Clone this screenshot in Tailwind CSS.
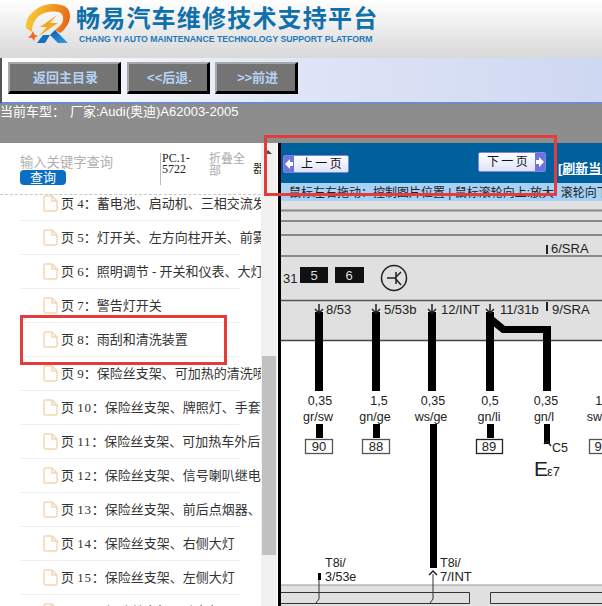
<!DOCTYPE html>
<html lang="zh">
<head>
<meta charset="UTF-8" />
<title>畅易汽车维修技术支持平台</title>
<script src="https://cdn.jsdelivr.net/npm/@tailwindcss/browser@4"></script>
</head>
<body class="relative w-[602px] h-[606px] overflow-hidden bg-white font-['Liberation_Sans','Noto_Sans_CJK_SC',sans-serif]">

  <!-- logo header -->
  <header class="h-[58px] flex bg-gradient-to-b from-white to-[#d9d9d9]">
    <svg class="ml-[25px] mt-[3px] w-[47px] h-[43px] shrink-0" viewBox="0 0 47 43">
      <defs>
        <linearGradient id="ring" x1="0" y1="0.3" x2="1" y2="0.5">
          <stop offset="0" stop-color="#f9cf3a" />
          <stop offset="0.55" stop-color="#f29a22" />
          <stop offset="1" stop-color="#e9661b" />
        </linearGradient>
        <linearGradient id="leg" x1="0" y1="0" x2="1" y2="1">
          <stop offset="0" stop-color="#0b5aa8" />
          <stop offset="1" stop-color="#36a2e6" />
        </linearGradient>
      </defs>
      <path d="M1 25C1 16 4 12 8 9C14 3 21 1 28 1C36 1 42 3 44 8C46 13 45 19 41 24C39 27 37 29 35 30L30 27C34 24 38 21 38 16C38 11 36 9 32 9C26 8 21 9 17 11C11 14 7 20 7 29Z" fill="url(#ring)" />
      <path d="M32 12L15 24L22 24L14 33L33 20L25 20Z" fill="#f5a623" />
      <path d="M12 40L18 32H25L20 40Z" fill="#1670c0" />
      <path d="M30 27L43 40H33L25 32Z" fill="url(#leg)" />
      <path d="M8 28L9.500 31.500L13 33L10 34.500L9 38L7 35L3 34.500L6 32Z" fill="#ee6a25" />
    </svg>
    <div class="ml-[4px] pt-[1px]">
      <div class="text-[24px] leading-[32px] font-bold tracking-[1.200px] text-[#1070ab] whitespace-nowrap font-['Noto_Sans_CJK_SC',sans-serif]">畅易汽车维修技术支持平台</div>
      <div class="ml-[3px] mt-[1px] text-[8.700px] leading-[10px] font-bold text-[#1f78b8] whitespace-nowrap">CHANG YI AUTO MAINTENANCE TECHNOLOGY SUPPORT PLATFORM</div>
    </div>
  </header>

  <!-- toolbar -->
  <nav class="h-[46px] flex items-start gap-[5px] pl-[6px] pt-[4px] border-l-2 border-l-[#555] border-b-[2px] border-b-[#6f8bd0] bg-gradient-to-r from-white via-[#dfe5f6] to-[#cfd8f2]">
    <button class="w-[113px] h-[32px] mr-[1px] pl-[3px] bg-[#747474] border-2 border-t-[#a8a8a8] border-l-[#a8a8a8] border-r-[3px] border-b-[3px] border-r-black border-b-black text-[13px] font-bold text-[#b4d2f3]">返回主目录</button>
    <button class="w-[83px] h-[32px] pl-[3px] bg-[#747474] border-2 border-t-[#a8a8a8] border-l-[#a8a8a8] border-r-[3px] border-b-[3px] border-r-black border-b-black text-[13px] font-bold text-[#b4d2f3]">&lt;&lt;后退.</button>
    <button class="w-[83px] h-[32px] pl-[3px] bg-[#747474] border-2 border-t-[#a8a8a8] border-l-[#a8a8a8] border-r-[3px] border-b-[3px] border-r-black border-b-black text-[13px] font-bold text-[#b4d2f3]">&gt;&gt;前进</button>
  </nav>

  <!-- car model bar -->
  <div class="h-[39px] bg-[#8d8d8d] text-[13px] leading-[15px] text-white whitespace-nowrap"><span class="inline-block w-[70px]">当前车型：</span>厂家:Audi(奥迪)A62003-2005</div>

  <main class="flex h-[463px]">
    <!-- left tree -->
    <aside class="w-[261px] shrink-0 overflow-hidden flex flex-col">
      <div class="h-[52px] shrink-0 flex border-b border-dashed border-b-[#c8c8c8]">
        <div class="w-[160px] pl-[20px] pt-[12px] shrink-0">
          <div class="text-[13.300px] leading-[15px] text-[#b0b0b0] whitespace-nowrap">输入关键字查询</div>
          <div class="mt-[0px] w-[46px] h-[15px] rounded-[4px] bg-[#0a6fc4] text-white text-[13px] leading-[15px] text-center">查询</div>
        </div>
        <div class="w-[49px] shrink-0 mt-[10px] h-[32px] border-l border-l-[#bbb] pl-[1px] text-[12px] leading-[11px] font-['Liberation_Serif',serif] text-[#222]">PC.1-<br />5722</div>
        <div class="w-[44px] shrink-0 mt-[10px] text-[12px] leading-[12px] text-[#aaa]">折叠全<br />部</div>
        <div class="w-[8px] shrink-0 overflow-hidden mt-[20px] text-[12px] leading-[12px] text-[#222]">器</div>
      </div>
      <ul class="-mt-[8px] text-[13px] leading-[34px] text-[#333] font-['Liberation_Serif','Noto_Sans_CJK_SC',serif]">
        <li class="h-[34px] ml-[20px] w-[220px] flex items-center border-b border-b-[#eeeeee] whitespace-nowrap">
          <svg class="ml-[23px] mr-[3px] w-[15px] h-[17px] shrink-0" viewBox="0 0 15 17" fill="none" stroke="#f5d6b0" stroke-width="1.5"><path d="M1 2.500Q1 1 2.500 1H9L14 6V14.500Q14 16 12.500 16H2.500Q1 16 1 14.500ZM9 1V6H14" /></svg>
          <span>页 4：蓄电池、启动机、三相交流发电机</span>
        </li>
        <li class="h-[34px] ml-[20px] w-[220px] flex items-center border-b border-b-[#eeeeee] whitespace-nowrap">
          <svg class="ml-[23px] mr-[3px] w-[15px] h-[17px] shrink-0" viewBox="0 0 15 17" fill="none" stroke="#f5d6b0" stroke-width="1.5"><path d="M1 2.500Q1 1 2.500 1H9L14 6V14.500Q14 16 12.500 16H2.500Q1 16 1 14.500ZM9 1V6H14" /></svg>
          <span>页 5：灯开关、左方向柱开关、前雾灯</span>
        </li>
        <li class="h-[34px] ml-[20px] w-[220px] flex items-center border-b border-b-[#eeeeee] whitespace-nowrap">
          <svg class="ml-[23px] mr-[3px] w-[15px] h-[17px] shrink-0" viewBox="0 0 15 17" fill="none" stroke="#f5d6b0" stroke-width="1.5"><path d="M1 2.500Q1 1 2.500 1H9L14 6V14.500Q14 16 12.500 16H2.500Q1 16 1 14.500ZM9 1V6H14" /></svg>
          <span>页 6：照明调节 - 开关和仪表、大灯</span>
        </li>
        <li class="h-[34px] ml-[20px] w-[220px] flex items-center border-b border-b-[#eeeeee] whitespace-nowrap">
          <svg class="ml-[23px] mr-[3px] w-[15px] h-[17px] shrink-0" viewBox="0 0 15 17" fill="none" stroke="#f5d6b0" stroke-width="1.5"><path d="M1 2.500Q1 1 2.500 1H9L14 6V14.500Q14 16 12.500 16H2.500Q1 16 1 14.500ZM9 1V6H14" /></svg>
          <span>页 7：警告灯开关</span>
        </li>
        <li class="h-[34px] ml-[20px] w-[220px] flex items-center border-b border-b-[#eeeeee] whitespace-nowrap">
          <svg class="ml-[23px] mr-[3px] w-[15px] h-[17px] shrink-0" viewBox="0 0 15 17" fill="none" stroke="#f5d6b0" stroke-width="1.5"><path d="M1 2.500Q1 1 2.500 1H9L14 6V14.500Q14 16 12.500 16H2.500Q1 16 1 14.500ZM9 1V6H14" /></svg>
          <span>页 8：雨刮和清洗装置</span>
        </li>
        <li class="h-[34px] ml-[20px] w-[220px] flex items-center border-b border-b-[#eeeeee] whitespace-nowrap">
          <svg class="ml-[23px] mr-[3px] w-[15px] h-[17px] shrink-0" viewBox="0 0 15 17" fill="none" stroke="#f5d6b0" stroke-width="1.5"><path d="M1 2.500Q1 1 2.500 1H9L14 6V14.500Q14 16 12.500 16H2.500Q1 16 1 14.500ZM9 1V6H14" /></svg>
          <span>页 9：保险丝支架、可加热的清洗喷嘴</span>
        </li>
        <li class="h-[34px] ml-[20px] w-[220px] flex items-center border-b border-b-[#eeeeee] whitespace-nowrap">
          <svg class="ml-[23px] mr-[3px] w-[15px] h-[17px] shrink-0" viewBox="0 0 15 17" fill="none" stroke="#f5d6b0" stroke-width="1.5"><path d="M1 2.500Q1 1 2.500 1H9L14 6V14.500Q14 16 12.500 16H2.500Q1 16 1 14.500ZM9 1V6H14" /></svg>
          <span>页 <span class="tracking-[0.750px]">10</span>：保险丝支架、牌照灯、手套箱灯</span>
        </li>
        <li class="h-[34px] ml-[20px] w-[220px] flex items-center border-b border-b-[#eeeeee] whitespace-nowrap">
          <svg class="ml-[23px] mr-[3px] w-[15px] h-[17px] shrink-0" viewBox="0 0 15 17" fill="none" stroke="#f5d6b0" stroke-width="1.5"><path d="M1 2.500Q1 1 2.500 1H9L14 6V14.500Q14 16 12.500 16H2.500Q1 16 1 14.500ZM9 1V6H14" /></svg>
          <span>页 <span class="tracking-[0.750px]">11</span>：保险丝支架、可加热车外后视镜</span>
        </li>
        <li class="h-[34px] ml-[20px] w-[220px] flex items-center border-b border-b-[#eeeeee] whitespace-nowrap">
          <svg class="ml-[23px] mr-[3px] w-[15px] h-[17px] shrink-0" viewBox="0 0 15 17" fill="none" stroke="#f5d6b0" stroke-width="1.5"><path d="M1 2.500Q1 1 2.500 1H9L14 6V14.500Q14 16 12.500 16H2.500Q1 16 1 14.500ZM9 1V6H14" /></svg>
          <span>页 <span class="tracking-[0.750px]">12</span>：保险丝支架、信号喇叭继电器</span>
        </li>
        <li class="h-[34px] ml-[20px] w-[220px] flex items-center border-b border-b-[#eeeeee] whitespace-nowrap">
          <svg class="ml-[23px] mr-[3px] w-[15px] h-[17px] shrink-0" viewBox="0 0 15 17" fill="none" stroke="#f5d6b0" stroke-width="1.5"><path d="M1 2.500Q1 1 2.500 1H9L14 6V14.500Q14 16 12.500 16H2.500Q1 16 1 14.500ZM9 1V6H14" /></svg>
          <span>页 <span class="tracking-[0.750px]">13</span>：保险丝支架、前后点烟器、</span>
        </li>
        <li class="h-[34px] ml-[20px] w-[220px] flex items-center border-b border-b-[#eeeeee] whitespace-nowrap">
          <svg class="ml-[23px] mr-[3px] w-[15px] h-[17px] shrink-0" viewBox="0 0 15 17" fill="none" stroke="#f5d6b0" stroke-width="1.5"><path d="M1 2.500Q1 1 2.500 1H9L14 6V14.500Q14 16 12.500 16H2.500Q1 16 1 14.500ZM9 1V6H14" /></svg>
          <span>页 <span class="tracking-[0.750px]">14</span>：保险丝支架、右侧大灯</span>
        </li>
        <li class="h-[34px] ml-[20px] w-[220px] flex items-center border-b border-b-[#eeeeee] whitespace-nowrap">
          <svg class="ml-[23px] mr-[3px] w-[15px] h-[17px] shrink-0" viewBox="0 0 15 17" fill="none" stroke="#f5d6b0" stroke-width="1.5"><path d="M1 2.500Q1 1 2.500 1H9L14 6V14.500Q14 16 12.500 16H2.500Q1 16 1 14.500ZM9 1V6H14" /></svg>
          <span>页 <span class="tracking-[0.750px]">15</span>：保险丝支架、左侧大灯</span>
        </li>
        <li class="h-[34px] ml-[20px] w-[220px] flex items-center border-b border-b-[#eeeeee] whitespace-nowrap">
          <svg class="ml-[23px] mr-[3px] w-[15px] h-[17px] shrink-0" viewBox="0 0 15 17" fill="none" stroke="#f5d6b0" stroke-width="1.5"><path d="M1 2.500Q1 1 2.500 1H9L14 6V14.500Q14 16 12.500 16H2.500Q1 16 1 14.500ZM9 1V6H14" /></svg>
          <span>页 <span class="tracking-[0.750px]">16</span>：保险丝支架、驻车灯</span>
        </li>
      </ul>
    </aside>

    <!-- scrollbar -->
    <div class="w-[16px] shrink-0 bg-[#f1f1f1] relative">
      <div class="ml-[3px] mt-[7px] w-0 h-0 border-x-[4px] border-x-transparent border-b-[4px] border-b-[#505050]"></div>
      <div class="absolute left-[1px] top-[213px] w-[14px] h-[199px] bg-[#c1c1c1]"></div>
    </div>

    <!-- diagram viewer -->
    <section class="flex-1 min-w-0 border-l-[3px] border-l-black overflow-hidden ml-[1px]">
      <div class="h-[40px] relative bg-[#00609b] overflow-hidden">
        <button class="absolute left-[2px] top-[12px] w-[66px] h-[18px] flex items-center rounded-[2px] border border-[#7c86e0] bg-gradient-to-b from-white to-[#dfe3fb] text-[12px] leading-[16px] text-[#111]">
          <svg class="w-[10px] h-[16px] shrink-0 bg-[#6d74dd]" viewBox="0 0 10 16"><path d="M1 8L6 3V6H9V10H6V13Z" fill="#fff" /></svg>
          <span class="ml-[7px] whitespace-pre [word-spacing:-1px]">上 一 页</span>
        </button>
        <button class="absolute left-[197px] top-[9px] w-[68px] h-[20px] flex items-center rounded-[2px] border border-[#7c86e0] bg-gradient-to-b from-white to-[#dfe3fb] text-[12px] leading-[16px] text-[#111]">
          <span class="ml-[8px] whitespace-pre [word-spacing:-1px]">下 一 页</span>
          <svg class="ml-[7px] w-[10px] h-[18px] shrink-0 bg-[#6d74dd]" viewBox="0 0 10 18"><path d="M9 9L4 4V7H1V11H4V14Z" fill="#fff" /></svg>
        </button>
        <a class="absolute left-[277px] top-[17px] text-[13px] leading-[18px] font-bold text-white underline whitespace-nowrap">[刷新当前页]</a>
      </div>
      <div class="h-[18px] bg-[#a6d2f7] pl-[8px] pt-[1px] text-[12px] leading-[18px] text-[#222] whitespace-pre overflow-hidden">鼠标左右拖动：控制图片位置 | 鼠标滚轮向上:放大  滚轮向下:缩小</div>
      <svg class="block w-[321px] h-[405px]" viewBox="281 201 321 405" font-family="Liberation Sans, sans-serif" fill="#222">
        <rect x="281" y="201" width="321" height="140" fill="#e0e0e0" />
        <rect x="281" y="341" width="321" height="244" fill="#fff" />
        <rect x="281" y="585" width="321" height="21" fill="#e0e0e0" />
        <g stroke-width="1" fill="none">
          <path d="M281 210.500H602" stroke="#888" stroke-width="2" />
          <path d="M281 221H602M281 235H602M281 256H602" stroke="#333" />
          <path d="M281 300.500H602" stroke="#555" stroke-width="1.500" />
          <path d="M281 340.500H602" stroke="#444" stroke-width="1.500" />
          <path d="M281 585H602" stroke="#999" />
          <path d="M281 592.500H469.500V603.500H281M602 592.500H490.500V603.500H602" stroke="#333" />
        </g>
        <!-- top connectors -->
        <rect x="546" y="245" width="2" height="9" fill="#222" />
        <text x="551" y="253" font-size="13">6/SRA</text>
        <text x="283" y="283" font-size="13">31</text>
        <rect x="300" y="267" width="28" height="16" fill="#111" />
        <rect x="335" y="267" width="29" height="16" fill="#111" />
        <text x="314" y="280" font-size="13" fill="#ddd" text-anchor="middle">5</text>
        <text x="349" y="280" font-size="13" fill="#ddd" text-anchor="middle">6</text>
        <circle cx="394" cy="278" r="12.500" fill="none" stroke="#222" stroke-width="1.500" />
        <path d="M387 278H395L401 272M395 278L401 285M396 272V284" fill="none" stroke="#222" stroke-width="1.500" />
        <!-- wires -->
        <g fill="#000">
          <rect x="315" y="312" width="8" height="79" />
          <rect x="372" y="312" width="8" height="79" />
          <rect x="428" y="312" width="8" height="79" />
          <rect x="486" y="312" width="8" height="79" />
          <rect x="543" y="326" width="8" height="65" />
          <path d="M488 312L505 326H551V333H502L486 320Z" />
          <rect x="316" y="424" width="7" height="14" />
          <rect x="373" y="424" width="7" height="14" />
          <rect x="430" y="424" width="7" height="144" />
          <rect x="487" y="424" width="7" height="14" />
          <rect x="544" y="424" width="6" height="20" />
          <rect x="318" y="573" width="3" height="7" />
        </g>
        <path d="M319 304V312M315 309L319 313L323 309M376 304V312M372 309L376 313L380 309M432 304V312M428 309L432 313L436 309M490 304V312M486 309L490 313L494 309" stroke="#222" stroke-width="1.500" fill="none" />
        <rect x="546" y="302" width="2" height="9" fill="#222" />
        <g font-size="13">
          <text x="326" y="314">8/53</text>
          <text x="384" y="314">5/53b</text>
          <text x="441" y="314">12/INT</text>
          <text x="500" y="314">11/31b</text>
          <text x="552" y="314">9/SRA</text>
        </g>
        <g font-size="12.500" text-anchor="middle">
          <text x="320" y="405">0,35</text>
          <text x="318" y="421">gr/sw</text>
          <text x="379" y="405">1,5</text>
          <text x="375" y="421">gn/ge</text>
          <text x="433" y="405">0,35</text>
          <text x="431" y="421">ws/ge</text>
          <text x="490" y="405">0,5</text>
          <text x="489" y="421">gn/li</text>
          <text x="546" y="405">0,35</text>
          <text x="544" y="421">gn/l</text>
          <text x="604" y="405">1,5</text>
          <text x="603" y="421">sw/ge</text>
        </g>
        <g fill="#fff" stroke="#555" stroke-width="1.300">
          <rect x="305.500" y="439.500" width="27" height="14" />
          <rect x="362.500" y="439.500" width="27" height="14" />
          <rect x="476.500" y="439.500" width="26" height="14" stroke="#222" />
          <rect x="589.500" y="439.500" width="27" height="14" />
        </g>
        <g font-size="13" text-anchor="middle">
          <text x="319" y="451">90</text>
          <text x="376" y="451">88</text>
          <text x="489" y="451">89</text>
          <text x="598" y="451">9</text>
        </g>
        <path d="M544 444L547 441L551 446" fill="none" stroke="#222" stroke-width="1.500" />
        <text x="552" y="452" font-size="12.500">C5</text>
        <text x="534" y="476" font-size="21">E</text>
        <text x="547" y="476" font-size="13">ε7</text>
        <text x="325" y="567" font-size="12.500">T8i/</text>
        <text x="325" y="581" font-size="12.500">3/53e</text>
        <text x="440" y="567" font-size="12.500">T8i/</text>
        <text x="440" y="581" font-size="13">7/INT</text>
        <path d="M319 580V599L316 603M433 574V599L430 603" stroke="#333" fill="none" />
        <path d="M429 575L433 571L437 575" stroke="#222" stroke-width="1.500" fill="none" />
      </svg>
    </section>
  </main>

  <!-- red annotation boxes -->
  <div class="absolute left-[264px] top-[135px] w-[293px] h-[61px] border-[3px] border-[#e23c3c]"></div>
  <div class="absolute left-[20px] top-[315px] w-[207px] h-[50px] border-[3px] border-[#e23c3c]"></div>
</body>
</html>
